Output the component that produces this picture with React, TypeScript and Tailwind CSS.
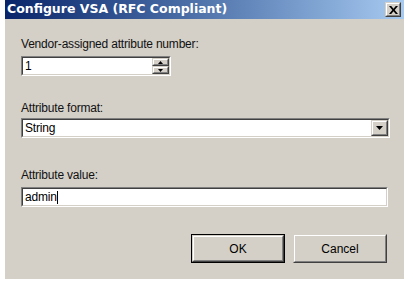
import type { ReactNode } from 'react';

const font = { fontFamily: '"Liberation Sans", Arial, sans-serif' };

function Sunken({ className = '', children }: { className?: string; children: ReactNode }) {
  return (
    <div className={`border border-t-[#808080] border-l-[#808080] border-b-white border-r-white ${className}`}>
      <div className="h-full border border-t-[#404040] border-l-[#404040] border-b-[#d4d0c8] border-r-[#d4d0c8] bg-white flex items-stretch">
        {children}
      </div>
    </div>
  );
}

function Raised({ className = '', children }: { className?: string; children?: ReactNode }) {
  return (
    <div className={`border border-t-[#d4d0c8] border-l-[#d4d0c8] border-b-[#404040] border-r-[#404040] bg-[#d4d0c8] ${className}`}>
      <div className="h-full border border-t-white border-l-white border-b-[#808080] border-r-[#808080] flex items-center justify-center">
        {children}
      </div>
    </div>
  );
}

function Tri({ up = false, size = 'sm' }: { up?: boolean; size?: 'sm' | 'md' }) {
  const w = size === 'md' ? 7 : 5;
  const h = size === 'md' ? 4 : 3;
  return (
    <svg width={w} height={h} viewBox={`0 0 ${w} ${h}`} className="block">
      <polygon points={up ? `0,${h} ${w},${h} ${w / 2},0` : `0,0 ${w},0 ${w / 2},${h}`} fill="#000" />
    </svg>
  );
}

export default function App() {
  return (
    <div className="w-[413px] h-[289px] bg-white overflow-hidden" style={font}>
      <div className="ml-[5px] w-[399px] h-[279px] bg-[#d4d0c8] flex flex-col">
        <div className="h-[19px] flex items-center justify-between pl-[2px] pr-[3px] bg-gradient-to-r from-[#0a246a] to-[#a6caf0]">
          <span
            className="text-white font-bold text-[12.5px] leading-none"
            style={{ fontFamily: '"DejaVu Sans", Tahoma, sans-serif' }}
          >
            Configure VSA (RFC Compliant)
          </span>
          <Raised className="w-[16px] h-[15px]">
            <svg width="9" height="8" viewBox="0 0 9 8" className="block">
              <path d="M0 0h2.2l2.3 2.8L6.8 0H9L5.7 4 9 8H6.8L4.5 5.2 2.2 8H0l3.3-4z" fill="#000" />
            </svg>
          </Raised>
        </div>

        <div className="px-[16px] flex flex-col text-[12px] leading-[14px] tracking-[-0.2px] text-[#111]">
          <label className="mt-[18px]">Vendor-assigned attribute number:</label>
          <Sunken className="mt-[5px] w-[150px] h-[20px]">
            <span className="flex-1 pl-[2px] flex items-center text-black">1</span>
            <div className="w-[17px] flex flex-col">
              <Raised className="flex-1">
                <Tri up />
              </Raised>
              <Raised className="flex-1">
                <Tri />
              </Raised>
            </div>
          </Sunken>

          <label className="mt-[25px]">Attribute format:</label>
          <Sunken className="mt-[3px] w-[369px] h-[20px]">
            <span className="flex-1 pl-[2px] flex items-center text-black">String</span>
            <Raised className="w-[17px]">
              <Tri size="md" />
            </Raised>
          </Sunken>

          <label className="mt-[30px]">Attribute value:</label>
          <Sunken className="mt-[5px] w-[367px] h-[20px]">
            <span className="flex-1 pl-[2px] flex items-center text-black">
              admin<span className="inline-block w-px h-[13px] bg-black" />
            </span>
          </Sunken>

          <div className="mt-[27px] flex justify-end gap-[8px] pr-[1px] tracking-normal">
            <div className="border border-black">
              <Raised className="w-[92px] h-[27px] text-black">OK</Raised>
            </div>
            <Raised className="w-[94px] h-[29px] text-black">Cancel</Raised>
          </div>
        </div>
      </div>
    </div>
  );
}
